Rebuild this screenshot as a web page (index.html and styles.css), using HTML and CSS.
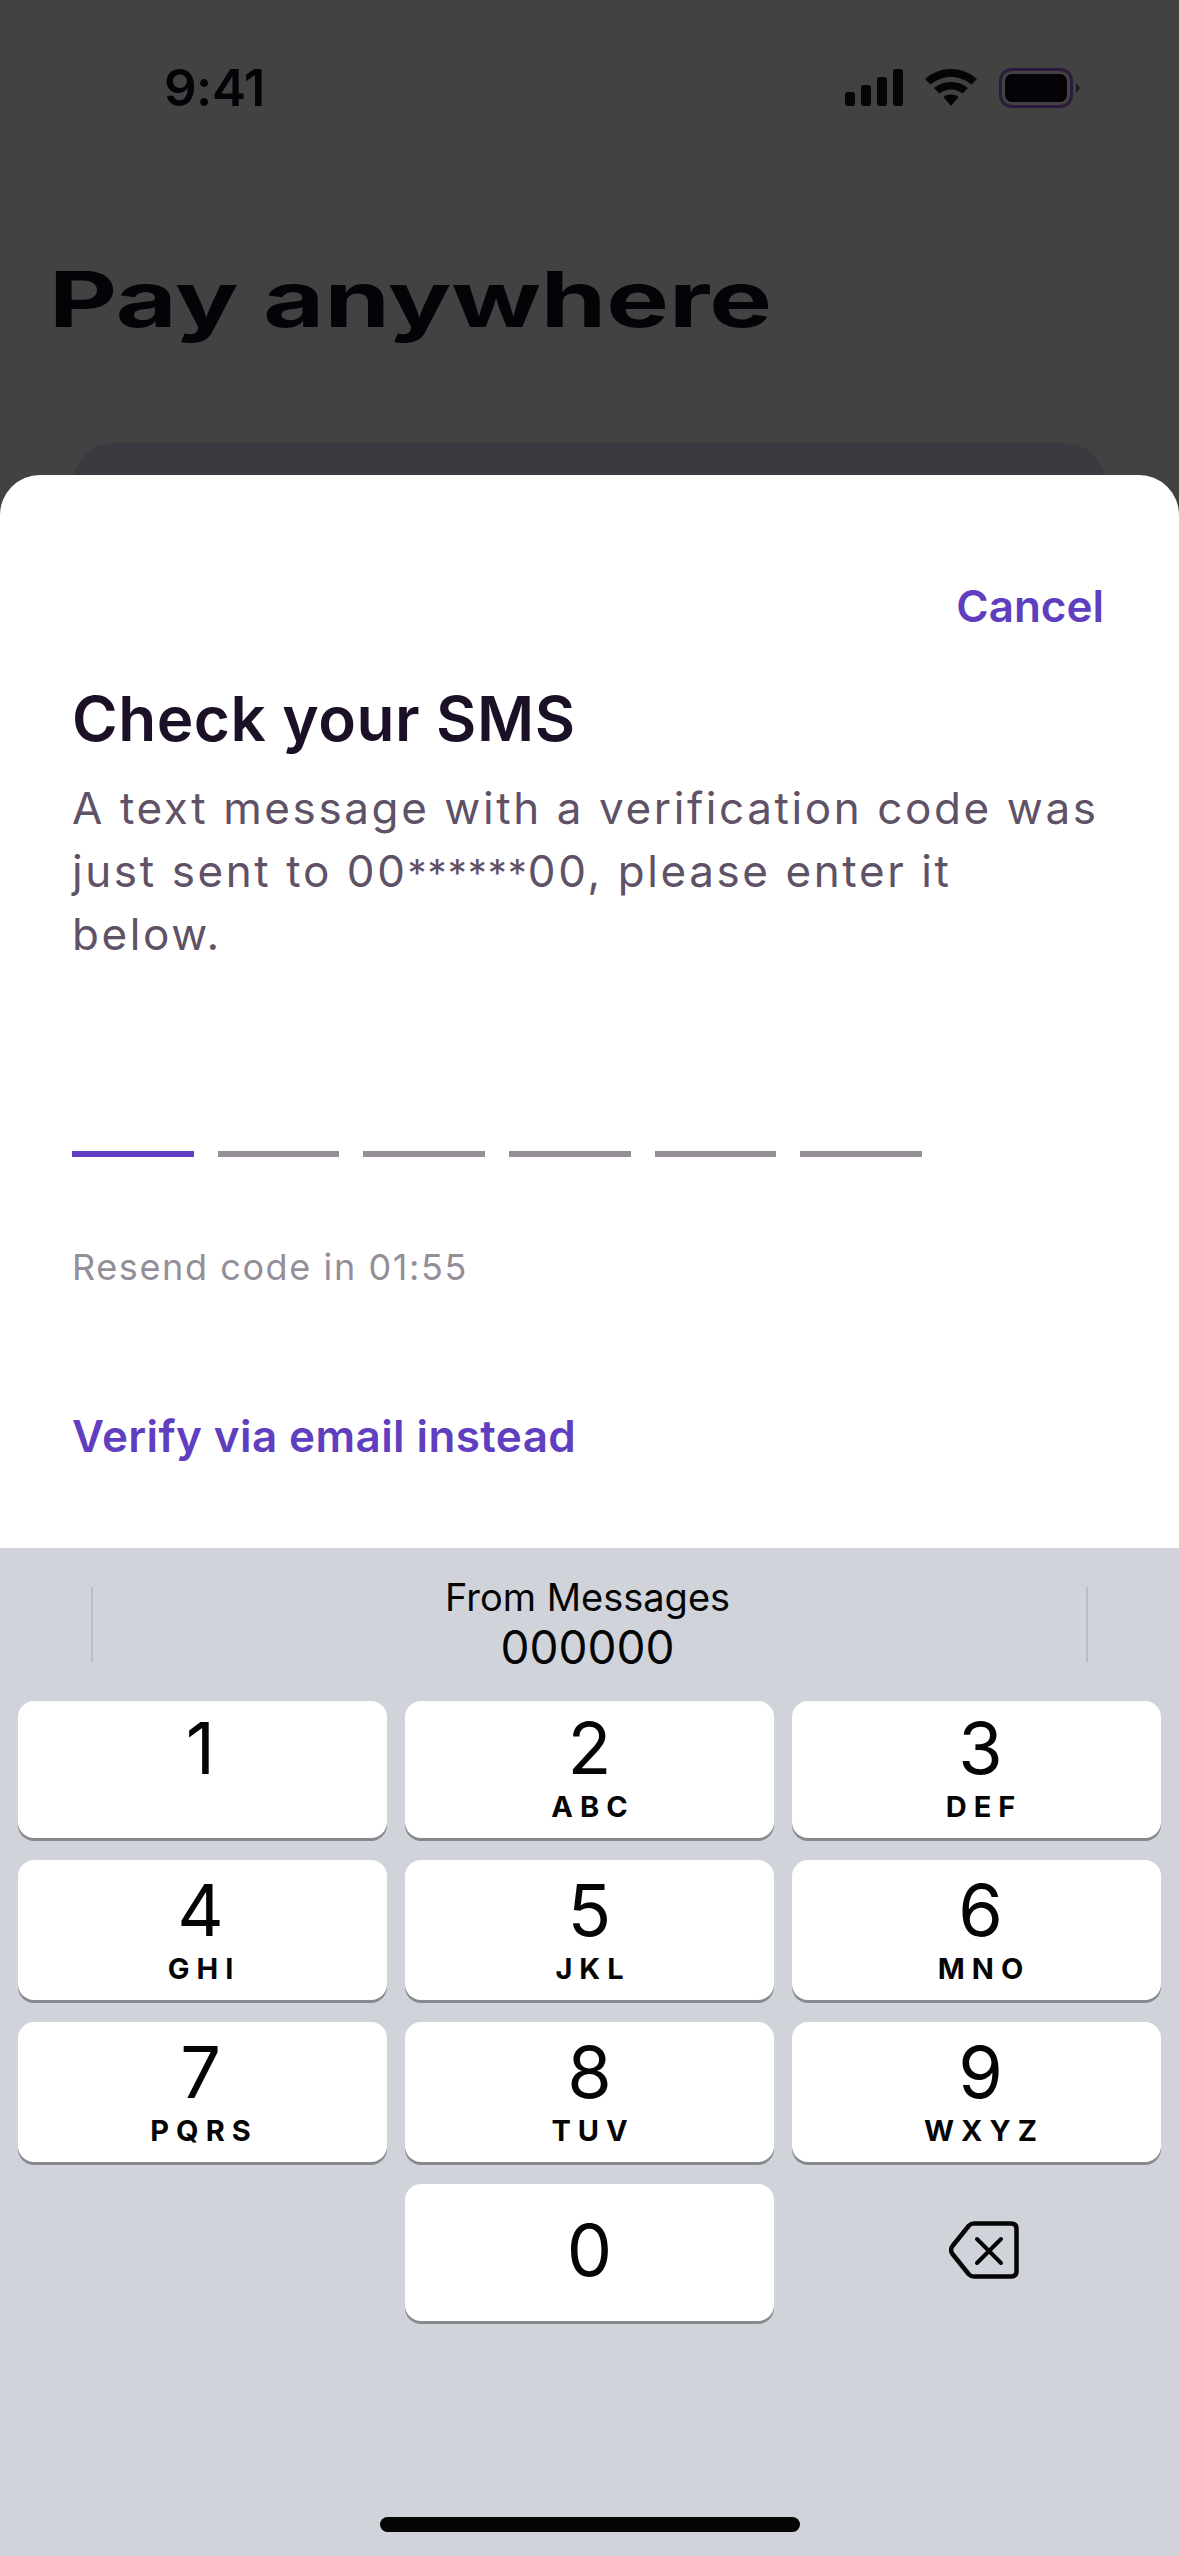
FILE: index.html
```html
<!DOCTYPE html>
<html lang="en">
<head>
<meta charset="utf-8">
<title>Check your SMS</title>
<link rel="stylesheet" href="styles.css">
</head>
<body>
<main class="page">
  <section class="backdrop">
    <div class="status">
      <span class="time">9:41</span>
      <div class="status-icons">
        <svg class="signal" width="58" height="37" viewBox="0 0 58 37"><rect x="0" y="23" width="10" height="14" rx="3"/><rect x="16" y="16" width="10" height="21" rx="3"/><rect x="32" y="8" width="10" height="29" rx="3"/><rect x="48" y="0" width="10" height="37" rx="3"/></svg>
        <svg class="wifi" width="52" height="37" viewBox="0 0 52 37"><path d="M0 10 C15 -3.3 37 -3.3 52 10 L46.500 15.500 C34 5.500 18 5.500 5.500 15.500Z"/><path d="M9 19 C18 11 34 11 43 19 L37.500 24.500 C30.500 19 21.500 19 14.500 24.500Z"/><path d="M18.500 28 C22.500 24.800 29.500 24.800 33.500 28 L26 37Z"/></svg>
        <svg class="battery" width="82" height="40" viewBox="0 0 82 40"><rect x="1.500" y="1.500" width="71" height="37" rx="11" fill="none" stroke="#2a1b3c" stroke-width="3"/><rect x="6" y="6" width="62" height="28" rx="7"/><path d="M77 15 L81 20 L77 25Z" fill="#1d1226"/></svg>
      </div>
    </div>
    <h1 class="page-title">Pay anywhere</h1>
    <div class="behind-card"></div>
  </section>

  <section class="sheet">
    <div class="sheet-top"><a class="link cancel">Cancel</a></div>
    <h2 class="sheet-title">Check your SMS</h2>
    <p class="sheet-copy">
      <span class="copy-line">A text message with a verification code was</span>
      <span class="copy-line">just sent to 00<span class="mask">******</span>00, please enter it</span>
      <span class="copy-line">below.</span>
    </p>
    <div class="code">
      <span class="slot active"></span><span class="slot"></span><span class="slot"></span><span class="slot"></span><span class="slot"></span><span class="slot"></span>
    </div>
    <p class="resend">Resend code in 01:55</p>
    <a class="link verify">Verify via email instead</a>
  </section>

  <section class="keyboard">
    <div class="suggest">
      <div class="suggest-text">
        <span class="suggest-from">From Messages</span>
        <span class="suggest-code">000000</span>
      </div>
    </div>
    <div class="keys">
      <div class="key"><span class="digit">1</span></div>
      <div class="key"><span class="digit">2</span><span class="letters">ABC</span></div>
      <div class="key"><span class="digit">3</span><span class="letters">DEF</span></div>
      <div class="key tall"><span class="digit">4</span><span class="letters">GHI</span></div>
      <div class="key tall"><span class="digit">5</span><span class="letters">JKL</span></div>
      <div class="key tall"><span class="digit">6</span><span class="letters">MNO</span></div>
      <div class="key tall"><span class="digit">7</span><span class="letters">PQRS</span></div>
      <div class="key tall"><span class="digit">8</span><span class="letters">TUV</span></div>
      <div class="key tall"><span class="digit">9</span><span class="letters">WXYZ</span></div>
      <div class="key blank"></div>
      <div class="key zero"><span class="digit">0</span></div>
      <div class="key blank del">
        <svg width="70" height="58" viewBox="0 0 70 58" fill="none" stroke="#050505" stroke-width="4.500" stroke-linejoin="round" stroke-linecap="round"><path d="M25 2.500 H62 Q67.500 2.500 67.500 8 V50 Q67.500 55.500 62 55.500 H25 Q22 55.500 20 53.500 L3.500 33 Q0.500 29 3.500 25 L20 4.500 Q22 2.500 25 2.500Z"/><path d="M28 18 L52 42 M52 18 L28 42" stroke-width="4"/></svg>
      </div>
    </div>
    <div class="home-bar"></div>
  </section>
</main>
</body>
</html>
```
FILE: styles.css
```css
* { box-sizing: border-box; }
html, body { margin: 0; padding: 0; }
body { width: 1179px; height: 2556px; overflow: hidden; background: #424242; font-family: Inter, "Liberation Sans", sans-serif; }
.page { width: 1179px; height: 2556px; display: flex; flex-direction: column; }

.backdrop { height: 475px; overflow: hidden; color: #060308; flex: none; }
.status { display: flex; justify-content: space-between; align-items: flex-start; padding: 60px 98px 0 164px; height: 68px; box-sizing: content-box; }
.time { font-size: 51px; line-height: 56px; font-weight: 600; letter-spacing: -0.5px; }
.status-icons { display: flex; align-items: flex-start; margin-top: 8px; }
.signal { fill: #050505; margin-top: 1px; }
.wifi { fill: #050505; margin: 1px 0 0 22px; }
.battery { fill: #050208; margin-left: 22px; }
.page-title { margin: 129px 0 0 49px; font-size: 77px; line-height: 84px; font-weight: 700; white-space: nowrap; transform: scaleX(1.366); transform-origin: left center; }
.behind-card { margin: 102px 74px 0 73px; height: 80px; background: #3b3a40; border-radius: 40px 40px 0 0; }

.sheet { height: 1073px; flex: none; background: #fff; border-radius: 40px 40px 0 0; padding: 0 72px; display: flex; flex-direction: column; align-items: flex-start; }
.sheet-top { align-self: stretch; display: flex; justify-content: flex-end; padding: 103px 3px 0 0; }
.link { color: #5f3fc0; font-weight: 600; font-size: 44px; line-height: 56px; }
.sheet-title { margin: 49px 0 0; font-size: 62px; line-height: 72px; font-weight: 600; letter-spacing: 0.500px; color: #1b1026; white-space: nowrap; }
.sheet-copy { margin: 22px 0 0; font-size: 44px; line-height: 63px; color: #5f5266; letter-spacing: 2.600px; font-weight: 400; }
.copy-line { display: block; white-space: nowrap; }
.mask { font-size: 38px; line-height: 1; letter-spacing: 1px; }
.code { display: flex; gap: 24px; margin-top: 185px; }
.slot { width: 121.700px; height: 6px; background: #949096; }
.slot.active { background: #5f3fc0; }
.resend { margin: 88px 0 0; font-size: 36px; line-height: 44px; color: #938e98; letter-spacing: 1.600px; }
.verify { margin-top: 119px; letter-spacing: 0.400px; }

.keyboard { flex: 1; background: #d0d3da; display: flex; flex-direction: column; position: relative; }
.suggest { height: 153px; margin: 0 91px; padding-top: 27px; display: flex; justify-content: center; position: relative; }
.suggest::before, .suggest::after { content: ""; position: absolute; top: 39px; width: 2px; height: 75px; background: #bcbcc6; }
.suggest::before { left: 0; }
.suggest::after { right: 0; }
.suggest-text { display: flex; flex-direction: column; align-items: center; margin-left: -4px; }
.suggest-from { font-size: 38px; line-height: 44px; font-weight: 400; color: #050505; }
.suggest-code { font-size: 46px; line-height: 56px; color: #050505; }
.keys { display: grid; grid-template-columns: repeat(3, 369px); grid-template-rows: 137px 140px 140px 137px; column-gap: 18px; row-gap: 22px; padding-left: 18px; }
.key { background: #fff; border-radius: 16px; box-shadow: 0 3px 0 #88888f; display: flex; flex-direction: column; align-items: center; padding-top: 11px; color: #050505; }
.key:nth-child(3n+1) { padding-right: 4px; }
.key:nth-child(3n) { padding-left: 8px; }
.key.tall { padding-top: 14px; }
.key.blank { background: none; box-shadow: none; }
.digit { font-size: 72px; line-height: 72px; font-weight: 400; }
.letters { font-size: 29px; line-height: 30px; font-weight: 700; letter-spacing: 7px; margin-top: 8px; padding-left: 7px; }
.key.zero { padding-top: 30px; }
.del { justify-content: center; align-items: center; padding: 0; transform: translate(3px, -3px); }
.home-bar { position: absolute; left: 380px; bottom: 24px; width: 420px; height: 15px; border-radius: 8px; background: #050505; }
```
